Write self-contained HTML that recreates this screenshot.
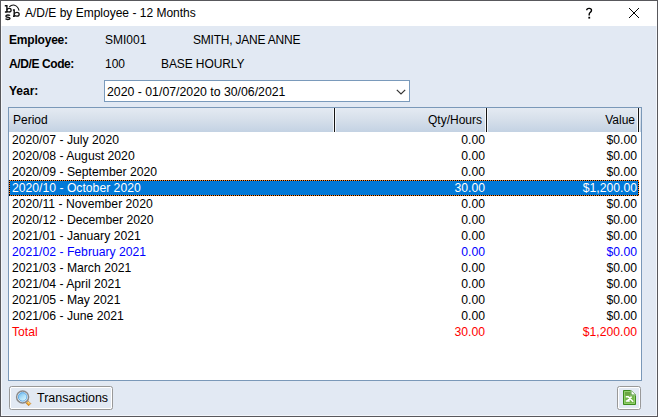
<!DOCTYPE html>
<html><head><meta charset="utf-8"><style>
*{margin:0;padding:0;box-sizing:border-box}
html,body{width:658px;height:417px;overflow:hidden;background:#e2e9f3}
body{font-family:"Liberation Sans",sans-serif;font-size:12px;color:#000;position:relative}
.frame{position:absolute;left:0;top:0;width:658px;height:417px;border:1px solid #58585c;background:#e2e9f3}
.inner{position:absolute;left:1px;top:26px;width:656px;height:390px;border-left:1px solid #f3f6fb;border-right:1px solid #f3f6fb;border-bottom:1px solid #f3f6fb}
.title{position:absolute;left:1px;top:1px;width:656px;height:25px;background:#fff}
.abs{position:absolute;white-space:nowrap;line-height:16px}
.b{font-weight:bold}
.combo{position:absolute;left:104px;top:80px;width:306px;height:22px;border:1px solid #7a9abb;background:#fff}
.grid{position:absolute;left:8px;top:107px;width:634px;height:274px;border:1px solid #7a98b8;background:#fff;font-size:12.2px}
.hdr{position:absolute;left:0;top:0;width:632px;height:24px;font-size:12px;background:linear-gradient(#e4eaf2 0%,#d7e0eb 45%,#c3d2e3 100%)}
.sep{position:absolute;top:0;width:1px;height:24px;background:#151515;box-shadow:-1px 0 #f4f7fb,1px 0 #f4f7fb}
.row{position:absolute;left:0;width:630px;height:16px;line-height:16px}
.row span{position:absolute;top:0;white-space:nowrap}
.c1{left:3px}
.c2{right:154px}
.c3{right:2px}
.sel{background:#0078d7;color:#fff}
.sel:before{content:"";position:absolute;left:0;top:0;right:0;bottom:0;
 background:
 repeating-linear-gradient(to right,#000 0 1px,#ff8728 1px 2px) top/100% 1px no-repeat,
 repeating-linear-gradient(to right,#000 0 1px,#ff8728 1px 2px) bottom/100% 1px no-repeat,
 repeating-linear-gradient(to bottom,#000 0 1px,#ff8728 1px 2px) left/1px 100% no-repeat,
 repeating-linear-gradient(to bottom,#000 0 1px,#ff8728 1px 2px) right/1px 100% no-repeat}
.blue{color:#0000ff}
.red{color:#ff0000}
.btn{position:absolute;border:1px solid #999;border-radius:2.5px;background:#e2e9f3;box-shadow:inset 0 0 0 1px #fff}
</style></head><body>
<div class="frame"></div>
<div class="inner"></div>
<div class="title"></div>
<!-- app icon -->
<svg class="abs" style="left:0;top:0" width="24" height="24" viewBox="0 0 24 24">
<g fill="none" stroke="#111" stroke-width="1.3">
<path d="M4.8 5.8 H6.9 V12 H4.9" stroke-width="1.4"/>
<path d="M6.9 10.2 Q7.3 8.4 9.2 8.4 Q11.1 8.4 11.1 10.2 Q11.1 12 9.2 12 Q7.5 12 6.9 11"/>
<path d="M9.3 6.9 Q11.5 4.6 14.5 5.2 Q17.8 6 19.1 10.6" stroke-width="1.05"/>
<path d="M12.9 10 H14.2 V16.2 H13" stroke-width="1.4"/>
<path d="M14.2 14.3 Q14.6 12.3 16.9 12.3 Q19.2 12.3 19.2 14.3 Q19.2 16.2 16.9 16.2 Q15 16.2 14.2 15.2"/>
<path d="M10 15.6 Q9.5 15 7.8 15 Q5.9 15 5.9 16.2 Q5.9 17.1 7.9 17.3 Q10 17.5 10 18.6 Q10 19.5 7.8 19.5 Q6 19.5 5.5 18.7" stroke-width="1.4"/>
</g></svg>
<div class="abs" style="left:25px;top:5px;font-size:12px;color:#000">A/D/E by Employee - 12 Months</div>
<svg class="abs" style="left:584px;top:6px" width="10" height="14" viewBox="0 0 10 14"><path d="M2.7 4.2 Q2.7 2.4 5.1 2.4 Q7.5 2.4 7.5 4.3 Q7.5 5.5 6.3 6.3 Q5.2 7.1 5.2 8.3 V9.6" fill="none" stroke="#000" stroke-width="1.4"/><rect x="4.35" y="10.8" width="1.8" height="1.8" fill="#000"/></svg>
<svg class="abs" style="left:628px;top:7px" width="12" height="12" viewBox="0 0 12 12"><path d="M1 1 L11 11 M11 1 L1 11" stroke="#000" stroke-width="1"/></svg>

<div class="abs b" style="left:9px;top:32px;letter-spacing:-0.2px">Employee:</div>
<div class="abs" style="left:105px;top:32px">SMI001</div>
<div class="abs" style="left:193px;top:32px;letter-spacing:-0.22px">SMITH, JANE ANNE</div>
<div class="abs b" style="left:9px;top:56px;letter-spacing:-0.4px">A/D/E Code:</div>
<div class="abs" style="left:105px;top:56px">100</div>
<div class="abs" style="left:161px;top:56px;letter-spacing:-0.1px">BASE HOURLY</div>
<div class="abs b" style="left:9px;top:83px">Year:</div>
<div class="combo">
  <div class="abs" style="left:2px;top:3px;font-size:12.3px">2020 - 01/07/2020 to 30/06/2021</div>
  <svg class="abs" style="left:291px;top:8px" width="10" height="6" viewBox="0 0 10 6"><path d="M0.8 0.8 L5 5 L9.2 0.8" fill="none" stroke="#333" stroke-width="1.2"/></svg>
</div>

<div class="grid">
  <div class="hdr">
    <div class="abs" style="left:4px;top:4px">Period</div>
    <div class="sep" style="left:325px"></div>
    <div class="abs" style="right:159px;top:4px">Qty/Hours</div>
    <div class="sep" style="left:477px"></div>
    <div class="abs" style="right:6px;top:4px">Value</div>
    <div class="sep" style="left:629px"></div>
  </div>
  <div class="row" style="top:24px"><span class="c1">2020/07 - July 2020</span><span class="c2">0.00</span><span class="c3">$0.00</span></div>
  <div class="row" style="top:40px"><span class="c1">2020/08 - August 2020</span><span class="c2">0.00</span><span class="c3">$0.00</span></div>
  <div class="row" style="top:56px"><span class="c1">2020/09 - September 2020</span><span class="c2">0.00</span><span class="c3">$0.00</span></div>
  <div class="row sel" style="top:72px"><span class="c1">2020/10 - October 2020</span><span class="c2">30.00</span><span class="c3">$1,200.00</span></div>
  <div class="row" style="top:88px"><span class="c1">2020/11 - November 2020</span><span class="c2">0.00</span><span class="c3">$0.00</span></div>
  <div class="row" style="top:104px"><span class="c1">2020/12 - December 2020</span><span class="c2">0.00</span><span class="c3">$0.00</span></div>
  <div class="row" style="top:120px"><span class="c1">2021/01 - January 2021</span><span class="c2">0.00</span><span class="c3">$0.00</span></div>
  <div class="row blue" style="top:136px"><span class="c1">2021/02 - February 2021</span><span class="c2">0.00</span><span class="c3">$0.00</span></div>
  <div class="row" style="top:152px"><span class="c1">2021/03 - March 2021</span><span class="c2">0.00</span><span class="c3">$0.00</span></div>
  <div class="row" style="top:168px"><span class="c1">2021/04 - April 2021</span><span class="c2">0.00</span><span class="c3">$0.00</span></div>
  <div class="row" style="top:184px"><span class="c1">2021/05 - May 2021</span><span class="c2">0.00</span><span class="c3">$0.00</span></div>
  <div class="row" style="top:200px"><span class="c1">2021/06 - June 2021</span><span class="c2">0.00</span><span class="c3">$0.00</span></div>
  <div class="row red" style="top:216px"><span class="c1">Total</span><span class="c2">30.00</span><span class="c3">$1,200.00</span></div>
</div>

<div class="btn" style="left:9px;top:386px;width:104px;height:24px"></div>
<svg class="abs" style="left:13px;top:388px" width="20" height="20" viewBox="0 0 20 20">
<defs>
<linearGradient id="lg" x1="0.2" y1="0.1" x2="0.8" y2="0.9"><stop offset="0" stop-color="#7cc2f0"/><stop offset="0.55" stop-color="#b4e2f8"/><stop offset="1" stop-color="#d2f2fc"/></linearGradient>
<radialGradient id="og" cx="0.65" cy="0.35" r="0.75"><stop offset="0" stop-color="#fff2b0"/><stop offset="0.45" stop-color="#f2a42a"/><stop offset="1" stop-color="#a8620c"/></radialGradient>
</defs>
<path d="M13.4 13.4 L15.2 15.2" stroke="#8c8c8c" stroke-width="2.6"/>
<path d="M14.8 12.6 L17.8 15.6 L15.6 17.8 L12.6 14.8 Z" fill="url(#og)" stroke="#c07a18" stroke-width="0.6" stroke-linejoin="round"/>
<path d="M13.6 14.4 L14.4 13.6" stroke="#fff" stroke-width="0.9"/>
<circle cx="9.6" cy="8.9" r="6.0" fill="#fff" stroke="#8a8a8a" stroke-width="1.5"/>
<circle cx="9.6" cy="8.9" r="4.3" fill="url(#lg)" stroke="#4f9fe2" stroke-width="0.9"/>
</svg>
<div class="abs" style="left:37px;top:390px;font-size:12.5px">Transactions</div>

<div class="btn" style="left:617px;top:386px;width:24px;height:24px"></div>
<svg class="abs" style="left:620px;top:388px" width="18" height="18" viewBox="0 0 18 18">
<path d="M3.5 2.5 H11 L15.5 7 V16.5 H3.5 Z" fill="#74b74c" stroke="#3b8a1e" stroke-width="1"/>
<path d="M4.5 3.5 H11.1 L14.5 6.9 V15.5 H4.5 Z" fill="none" stroke="#90cf6a" stroke-width="1"/>
<rect x="5" y="4" width="6" height="3.2" fill="#68a040" opacity="0.8"/>
<path d="M10.6 2.1 L15.9 7.4 H10.6 Z" fill="#fff"/><path d="M11 2.6 V7 H15.4" fill="none" stroke="#3b8a1e" stroke-width="0.9"/>
<path d="M5.8 8.8 H8.2 L13.2 13.8 M11.6 8.6 L7.4 12.8 M5.8 12.9 H9.8" stroke="#fff" stroke-width="1.5" fill="none"/>
</svg>
</body></html>
